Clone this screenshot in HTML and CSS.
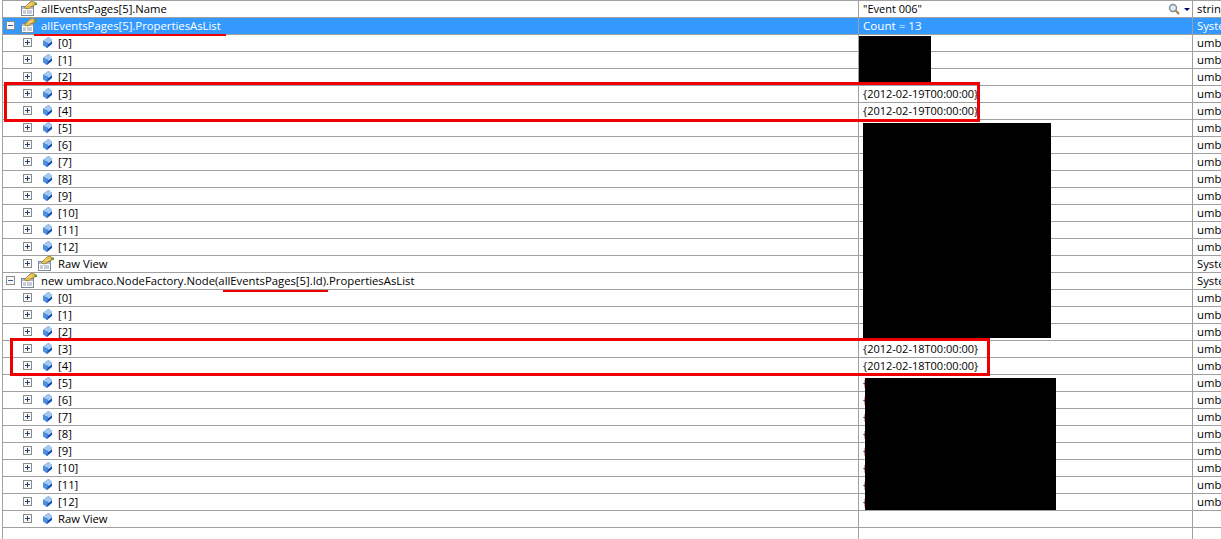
FILE: index.html
```html
<!DOCTYPE html>
<html>
<head>
<meta charset="utf-8">
<title>Watch</title>
<link rel="stylesheet" href="styles.css">
</head>
<body>
<svg class="defs" width="0" height="0">
<defs>
<symbol id="prop" viewBox="0 0 16 16">
<rect x=".5" y="5.5" width="12" height="9" fill="#fff" stroke="#7a8a9c"/>
<rect x="1" y="6" width="11" height="2" fill="#a9c0da"/>
<path d="M2 10h3M6 10h5M2 12h3M6 12h5" stroke="#8a9bb0"/>
<path d="M3.500 6.500L9 1l3-1 2.500 2L13 5l-3 .5-1.500 2-3.500.5z" fill="#e6be52" stroke="#8f6d1c" stroke-width=".7"/>
<path d="M7 4.500l2-2M9 5l2-2" stroke="#fbeeb0" stroke-width=".8"/>
<path d="M13.500 1.500h2.500v2.500h-2.500z" fill="#5c9a45"/>
</symbol>
<symbol id="cube" viewBox="0 0 9 11">
<path d="M5.500 0L9 3v4L4 11 0 8V4z" fill="#0f4fb5"/>
<path d="M5.500 0L9 3 5 6 0 4z" fill="#a3caf2"/>
<path d="M0 4l5 2-1 5-4-3z" fill="#4f8fdf"/>
<path d="M5 6l4-3v1L5.500 7z" fill="#e8f2fc"/>
</symbol>
<symbol id="plus" viewBox="0 0 9 9">
<rect x=".5" y=".5" width="8" height="8" fill="#f8f8f8" stroke="#8c8c8c"/>
<path d="M2 4.500h5M4.500 2v5" stroke="#2b3f6b"/>
</symbol>
<symbol id="minus" viewBox="0 0 9 9">
<rect x=".5" y=".5" width="8" height="8" fill="#f8f8f8" stroke="#8c8c8c"/>
<path d="M2 4.500h5" stroke="#3a5a9a"/>
</symbol>
</defs>
</svg>
<main class="grid" id="grid">
<div class="row"><div class="c1 lvl0"><span class="tw"></span><svg class="ic16"><use href="#prop"/></svg><span class="nm">allEventsPages[5].Name</span></div><div class="c2">"Event 006"<svg class="mag" viewBox="0 0 12 12"><circle cx="5" cy="5" r="3.500" fill="#dfeaf5" stroke="#7d8c99" stroke-width="1.400"/><path d="M7.800 7.800L11 11" stroke="#a57f3c" stroke-width="2"/></svg><span class="drop"></span></div><div class="c3">string</div></div>
<div class="row sel"><div class="c1 lvl0"><svg class="tg0"><use href="#minus"/></svg><svg class="ic16"><use href="#prop"/></svg><span class="nm">allEventsPages[5].PropertiesAsList</span></div><div class="c2 cnt">Count = 13</div><div class="c3">System.Collections</div></div>
<div class="row"><div class="c1 lvl1"><svg class="tg"><use href="#plus"/></svg><svg class="cb"><use href="#cube"/></svg><span class="nm">[0]</span></div><div class="c2"></div><div class="c3">umbraco</div></div>
<div class="row"><div class="c1 lvl1"><svg class="tg"><use href="#plus"/></svg><svg class="cb"><use href="#cube"/></svg><span class="nm">[1]</span></div><div class="c2"></div><div class="c3">umbraco</div></div>
<div class="row"><div class="c1 lvl1"><svg class="tg"><use href="#plus"/></svg><svg class="cb"><use href="#cube"/></svg><span class="nm">[2]</span></div><div class="c2"></div><div class="c3">umbraco</div></div>
<div class="row"><div class="c1 lvl1"><svg class="tg"><use href="#plus"/></svg><svg class="cb"><use href="#cube"/></svg><span class="nm">[3]</span></div><div class="c2">{2012-02-19T00:00:00}</div><div class="c3">umbraco</div></div>
<div class="row"><div class="c1 lvl1"><svg class="tg"><use href="#plus"/></svg><svg class="cb"><use href="#cube"/></svg><span class="nm">[4]</span></div><div class="c2">{2012-02-19T00:00:00}</div><div class="c3">umbraco</div></div>
<div class="row"><div class="c1 lvl1"><svg class="tg"><use href="#plus"/></svg><svg class="cb"><use href="#cube"/></svg><span class="nm">[5]</span></div><div class="c2"></div><div class="c3">umbraco</div></div>
<div class="row"><div class="c1 lvl1"><svg class="tg"><use href="#plus"/></svg><svg class="cb"><use href="#cube"/></svg><span class="nm">[6]</span></div><div class="c2"></div><div class="c3">umbraco</div></div>
<div class="row"><div class="c1 lvl1"><svg class="tg"><use href="#plus"/></svg><svg class="cb"><use href="#cube"/></svg><span class="nm">[7]</span></div><div class="c2"></div><div class="c3">umbraco</div></div>
<div class="row"><div class="c1 lvl1"><svg class="tg"><use href="#plus"/></svg><svg class="cb"><use href="#cube"/></svg><span class="nm">[8]</span></div><div class="c2"></div><div class="c3">umbraco</div></div>
<div class="row"><div class="c1 lvl1"><svg class="tg"><use href="#plus"/></svg><svg class="cb"><use href="#cube"/></svg><span class="nm">[9]</span></div><div class="c2"></div><div class="c3">umbraco</div></div>
<div class="row"><div class="c1 lvl1"><svg class="tg"><use href="#plus"/></svg><svg class="cb"><use href="#cube"/></svg><span class="nm">[10]</span></div><div class="c2"></div><div class="c3">umbraco</div></div>
<div class="row"><div class="c1 lvl1"><svg class="tg"><use href="#plus"/></svg><svg class="cb"><use href="#cube"/></svg><span class="nm">[11]</span></div><div class="c2"></div><div class="c3">umbraco</div></div>
<div class="row"><div class="c1 lvl1"><svg class="tg"><use href="#plus"/></svg><svg class="cb"><use href="#cube"/></svg><span class="nm">[12]</span></div><div class="c2"></div><div class="c3">umbraco</div></div>
<div class="row"><div class="c1 lvl1"><svg class="tg raw"><use href="#plus"/></svg><svg class="ic16"><use href="#prop"/></svg><span class="nm">Raw View</span></div><div class="c2"></div><div class="c3">System</div></div>
<div class="row"><div class="c1 lvl0"><svg class="tg0"><use href="#minus"/></svg><svg class="ic16"><use href="#prop"/></svg><span class="nm">new umbraco.NodeFactory.Node(allEventsPages[5].Id).PropertiesAsList</span></div><div class="c2"></div><div class="c3">System.Collections</div></div>
<div class="row"><div class="c1 lvl1"><svg class="tg"><use href="#plus"/></svg><svg class="cb"><use href="#cube"/></svg><span class="nm">[0]</span></div><div class="c2"></div><div class="c3">umbraco</div></div>
<div class="row"><div class="c1 lvl1"><svg class="tg"><use href="#plus"/></svg><svg class="cb"><use href="#cube"/></svg><span class="nm">[1]</span></div><div class="c2"></div><div class="c3">umbraco</div></div>
<div class="row"><div class="c1 lvl1"><svg class="tg"><use href="#plus"/></svg><svg class="cb"><use href="#cube"/></svg><span class="nm">[2]</span></div><div class="c2"></div><div class="c3">umbraco</div></div>
<div class="row"><div class="c1 lvl1"><svg class="tg"><use href="#plus"/></svg><svg class="cb"><use href="#cube"/></svg><span class="nm">[3]</span></div><div class="c2">{2012-02-18T00:00:00}</div><div class="c3">umbraco</div></div>
<div class="row"><div class="c1 lvl1"><svg class="tg"><use href="#plus"/></svg><svg class="cb"><use href="#cube"/></svg><span class="nm">[4]</span></div><div class="c2">{2012-02-18T00:00:00}</div><div class="c3">umbraco</div></div>
<div class="row"><div class="c1 lvl1"><svg class="tg"><use href="#plus"/></svg><svg class="cb"><use href="#cube"/></svg><span class="nm">[5]</span></div><div class="c2 brace">{</div><div class="c3">umbraco</div></div>
<div class="row"><div class="c1 lvl1"><svg class="tg"><use href="#plus"/></svg><svg class="cb"><use href="#cube"/></svg><span class="nm">[6]</span></div><div class="c2 brace">{</div><div class="c3">umbraco</div></div>
<div class="row"><div class="c1 lvl1"><svg class="tg"><use href="#plus"/></svg><svg class="cb"><use href="#cube"/></svg><span class="nm">[7]</span></div><div class="c2 brace">{</div><div class="c3">umbraco</div></div>
<div class="row"><div class="c1 lvl1"><svg class="tg"><use href="#plus"/></svg><svg class="cb"><use href="#cube"/></svg><span class="nm">[8]</span></div><div class="c2 brace">{</div><div class="c3">umbraco</div></div>
<div class="row"><div class="c1 lvl1"><svg class="tg"><use href="#plus"/></svg><svg class="cb"><use href="#cube"/></svg><span class="nm">[9]</span></div><div class="c2 brace">{</div><div class="c3">umbraco</div></div>
<div class="row"><div class="c1 lvl1"><svg class="tg"><use href="#plus"/></svg><svg class="cb"><use href="#cube"/></svg><span class="nm">[10]</span></div><div class="c2 brace">{</div><div class="c3">umbraco</div></div>
<div class="row"><div class="c1 lvl1"><svg class="tg"><use href="#plus"/></svg><svg class="cb"><use href="#cube"/></svg><span class="nm">[11]</span></div><div class="c2 brace">{</div><div class="c3">umbraco</div></div>
<div class="row"><div class="c1 lvl1"><svg class="tg"><use href="#plus"/></svg><svg class="cb"><use href="#cube"/></svg><span class="nm">[12]</span></div><div class="c2 brace">{</div><div class="c3">umbraco</div></div>
<div class="row"><div class="c1 lvl1"><svg class="tg"><use href="#plus"/></svg><svg class="cb"><use href="#cube"/></svg><span class="nm">Raw View</span></div><div class="c2"></div><div class="c3"></div></div>
<div class="row"><div class="c1"></div><div class="c2"></div><div class="c3"></div></div>
<div class="black b1"></div>
<div class="black b2"></div>
<div class="black b3"></div>
<div class="redbox r1"></div>
<div class="redbox r2"></div>
<div class="redline l1"></div>
<div class="redline l2"></div>
</main>
</body>
</html>
```
FILE: styles.css
```css
html, body { margin: 0; padding: 0; background: #fff; }
body { width: 1221px; height: 539px; overflow: hidden; font-family: "Open Sans", "Noto Sans", sans-serif; font-size: 11px; color: #000; }
.defs { position: absolute; }
.grid { position: relative; height: 539px; overflow: hidden; border-top: 1px solid #a0a0a0; margin-left: 2px; box-sizing: border-box; border-left: 1px solid #a0a0a0; }
.row { display: grid; grid-template-columns: 856px 334px 1fr; height: 17px; box-sizing: border-box; border-bottom: 1px solid #a0a0a0; line-height: 16px; white-space: nowrap; }
.c1 { display: flex; align-items: center; border-right: 1px solid #a0a0a0; overflow: hidden; font-size: 11.3px; }
.c2 { display: flex; align-items: center; padding-left: 4px; border-right: 1px solid #a0a0a0; position: relative; overflow: hidden; }
.c3 { padding-left: 4px; overflow: hidden; font-size: 11.3px; }
.cnt { font-size: 11.6px; }
.brace { color: #30006a; }
.lvl0 { padding-left: 3px; }
.lvl1 { padding-left: 20px; }
.tg0, .tg { width: 9px; height: 9px; flex: none; margin-top: -1px; }
.tg0 { margin-right: 6px; }
.tg { margin-right: 11px; }
.tg.raw { margin-right: 6px; }
.ic16 { width: 16px; height: 16px; flex: none; margin-right: 4px; }
.lvl0 > .tw { width: 15px; flex: none; }
.cb { width: 9px; height: 11px; flex: none; margin: -1px 6px 0 0; }
.nm { display: block; margin-top: -1px; }
.sel { background: #3399ff; color: #fff; }
.mag { position: absolute; right: 12px; top: 2px; width: 12px; height: 12px; }
.drop { position: absolute; right: 2px; top: 7px; border: 3px solid transparent; border-top: 3px solid #00006e; border-bottom: 0; }
.black { position: absolute; background: #000; }
.b1 { left: 856px; top: 35px; width: 72px; height: 46px; }
.b2 { left: 860px; top: 122px; width: 188px; height: 215px; }
.b3 { left: 862px; top: 377px; width: 191px; height: 132px; }
.redbox { position: absolute; border: 3px solid #ee0000; box-sizing: border-box; }
.r1 { left: 1px; top: 81px; width: 976px; height: 40px; }
.r2 { left: 7px; top: 337px; width: 980px; height: 38px; }
.redline { position: absolute; height: 2px; background: #ee0000; }
.l1 { left: 31px; top: 33px; width: 192px; }
.l2 { left: 220px; top: 289px; width: 105px; }
```
